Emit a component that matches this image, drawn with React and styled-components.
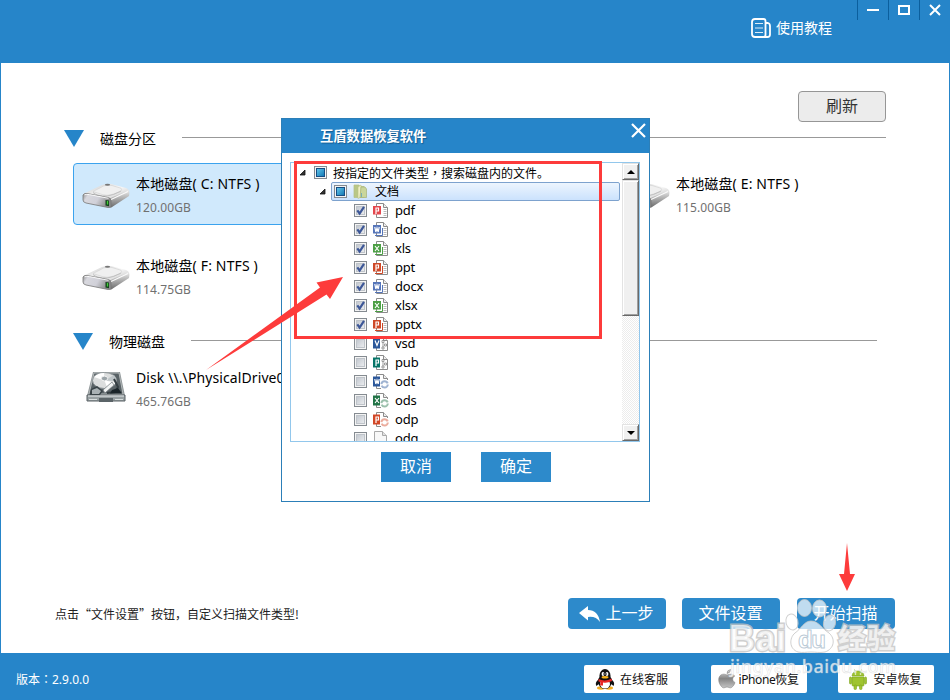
import React, { useState } from "react";
import styled, { createGlobalStyle } from "styled-components";

const GlobalStyle = createGlobalStyle`
  * {
    box-sizing: border-box;
  }
  body {
    margin: 0;
    overflow: hidden;
    font-family: "Noto Sans", "Noto Sans CJK SC", sans-serif;
  }
  svg {
    display: block;
    flex: none;
  }
  button {
    font-family: inherit;
    padding: 0;
    margin: 0;
    border: 0;
    background: none;
  }
`;

const Window = styled.div`
  position: relative;
  display: flex;
  flex-direction: column;
  width: 950px;
  height: 700px;
  background: #fff;
  overflow: hidden;
`;

const Header = styled.header`
  display: flex;
  justify-content: flex-end;
  height: 63px;
  background: #2685c9;
`;

const Tutorial = styled.div`
  display: flex;
  align-items: center;
  gap: 5px;
  height: 20px;
  margin: 18px 25px 0 0;
  color: #fff;
  font-size: 14px;
  line-height: 20px;
`;

const WindowButton = styled.button`
  display: flex;
  justify-content: center;
  width: 31px;
  height: 20px;
  padding-top: 4px;
  border-left: 1px solid #0b5f9e;
`;

const Body = styled.main`
  flex: 1;
  display: flex;
  flex-direction: column;
  border: solid #2685c9;
  border-width: 0 1px;
  padding: 28px 0 0;
`;

const RefreshButton = styled.button`
  align-self: flex-end;
  width: 88px;
  height: 31px;
  margin-right: 63px;
  padding-bottom: 2px;
  border: 1px solid #969696;
  border-radius: 4px;
  background: #ececec;
  color: #333;
  font-size: 16px;
  line-height: 26px;
`;

const SectionTitle = styled.div`
  display: flex;
  align-items: center;
  height: 20px;
  margin: ${(props) => props.$margin};
  color: #000;
  font-size: 14px;
  line-height: 20px;
  span {
    margin: 0 26px 0 16px;
    padding-top: 2px;
  }
  &::after {
    content: "";
    flex: 1;
    height: 1px;
    margin-bottom: 2px;
    background: #999;
  }
`;

const DiskGrid = styled.div`
  display: grid;
  grid-template-columns: repeat(3, 270px);
  grid-auto-rows: 62px;
  row-gap: 20px;
  margin-left: 72px;
`;

const DiskCard = styled.div`
  grid-column: ${(props) => props.$column};
  display: flex;
  align-items: flex-start;
  width: 262px;
  height: 62px;
  padding-left: 8px;
  border: 1px solid ${(props) => (props.$active ? "#3ba3ee" : "transparent")};
  border-radius: 4px;
  background: ${(props) => (props.$active ? "#d0e9fc" : "transparent")};
`;

const DiskIcon = styled.div`
  width: 54px;
  padding-top: ${(props) => props.$top}px;
`;

const DiskText = styled.div`
  white-space: nowrap;
  padding-top: 10px;
  .name {
    color: #000;
    font-size: 14px;
    line-height: 20px;
    height: 24px;
    letter-spacing: ${(props) => props.$spacing || 0}px;
  }
  .size {
    color: #707070;
    font-size: 12px;
    line-height: 20px;
    letter-spacing: 0.1px;
  }
`;

const ActionBar = styled.div`
  display: flex;
  align-items: center;
  margin-top: auto;
  height: 31px;
  margin-bottom: 24px;
  padding: 0 54px 0 54px;
`;

const Hint = styled.p`
  flex: 1;
  margin: 0;
  color: #222;
  font-family: "Noto Sans CJK SC", sans-serif;
  font-size: 12px;
  line-height: 20px;
`;

const ActionButton = styled.button`
  display: flex;
  align-items: center;
  justify-content: center;
  gap: 5px;
  width: 98px;
  height: 31px;
  margin-left: ${(props) => props.$gap || 0}px;
  padding: 0 1px 2px 0;
  border-radius: 4px;
  background: #2d8acb;
  color: #fff;
  font-size: 16px;
  line-height: 28px;
  svg {
    margin-top: 2px;
  }
`;

const Footer = styled.footer`
  display: flex;
  align-items: center;
  gap: 31px;
  height: 47px;
  padding: 5px 16px 0;
  background: #2685c9;
`;

const Version = styled.span`
  flex: 1;
  padding-top: 2px;
  color: #fff;
  font-family: "Noto Sans", "Noto Sans CJK TC", sans-serif;
  font-size: 12px;
  line-height: 20px;
`;

const FooterButton = styled.button`
  display: flex;
  align-items: center;
  justify-content: center;
  gap: ${(props) => props.$gap}px;
  width: 96px;
  height: 28px;
  padding-right: 1px;
  border-radius: 2px;
  background: #fff;
  color: #111;
  font-size: 12px;
  line-height: 20px;
  letter-spacing: ${(props) => props.$spacing || 0}px;
  white-space: nowrap;
  span {
    padding-top: 2px;
  }
`;

const Dialog = styled.div`
  position: absolute;
  left: 281px;
  top: 118px;
  width: 369px;
  height: 384px;
  border: 1px solid #2c7fb8;
  background: #fff;
`;

const DialogTitle = styled.div`
  display: flex;
  align-items: center;
  justify-content: space-between;
  height: 34px;
  padding: 0 3px 0 38px;
  background: #2685c9;
  color: #fff;
  font-size: 13.3px;
  font-weight: bold;
  text-shadow: 1px 1px 1px #145d93;
  span {
    padding-bottom: 2px;
  }
  button {
    align-self: flex-start;
    padding-top: 4px;
  }
`;

const ListBox = styled.div`
  display: flex;
  width: 350px;
  height: 280px;
  margin: 9px 0 0 8px;
  border: 1px solid #92c7ec;
  overflow: hidden;
`;

const Tree = styled.div`
  flex: 1;
  height: 278px;
  overflow: hidden;
`;

const TreeRow = styled.div`
  display: flex;
  align-items: center;
  height: 19px;
  padding-left: ${(props) => props.$indent}px;
`;

const RowLabel = styled.span`
  margin-left: ${(props) => props.$gap}px;
  color: #000;
  font-size: ${(props) => props.$size || 13}px;
  letter-spacing: ${(props) => (props.$size ? 0 : -0.2)}px;
  line-height: 19px;
  white-space: nowrap;
`;

const Comma = styled.span`
  font-family: "Noto Sans CJK TC", sans-serif;
`;

const Selected = styled.div`
  display: flex;
  align-items: center;
  width: 289px;
  height: 19px;
  margin-left: 5px;
  padding-left: 2px;
  border: 1px solid #7da2ce;
  border-radius: 2px;
  background: linear-gradient(#edf5fe, #cbe2fd);
`;

const CheckBox = styled.span`
  display: flex;
  align-items: center;
  justify-content: center;
  flex: none;
  width: 13px;
  height: 13px;
  border: 1px solid #858b91;
  background: linear-gradient(135deg, #b9bfc8, #f4f5f6);
  box-shadow: inset 0 0 0 1px #f4f4f4, inset 0 0 0 2px #bfc4ca;
`;

const Partial = styled.i`
  width: 9px;
  height: 9px;
  border: 1px solid #164d83;
  background: linear-gradient(135deg, #61c5ea, #1479b5);
`;

const ScrollBar = styled.div`
  display: flex;
  flex-direction: column;
  width: 17px;
  background: repeating-conic-gradient(#ececec 0 25%, #fff 0 50%) 0 0 / 2px 2px;
`;

const ScrollPart = styled.div`
  display: flex;
  align-items: center;
  justify-content: center;
  height: ${(props) => props.$height}px;
  margin-top: ${(props) => (props.$last ? "auto" : 0)};
  border: 1px solid;
  border-color: #e3e3e3 #696969 #696969 #e3e3e3;
  box-shadow: inset 1px 1px #fff, inset -1px -1px #a0a0a0;
  background: #f0f0f0;
`;

const DialogButtons = styled.div`
  display: flex;
  gap: 30px;
  margin: 10px 0 0 99px;
  button {
    width: 70px;
    height: 30px;
    padding-bottom: 2px;
    background: #2685c9;
    color: #fff;
    font-size: 16px;
    line-height: 28px;
  }
  button + button {
    background: #2d8acb;
  }
`;

const Overlay = styled.svg`
  position: absolute;
  left: 0;
  top: 0;
  pointer-events: none;
`;

const Triangle = () => (
  <svg width="20" height="17" viewBox="0 0 20 17">
    <path d="M0 0h20L10 17z" fill="#2685c9" />
  </svg>
);

const TutorialIcon = () => (
  <svg width="20" height="20" viewBox="0 0 20 20" fill="none" stroke="#fff">
    <path
      d="M4 1h8.5q2 0 2 2v14q0 2-2 2H4q-3 0-3-3V4q0-3 3-3z"
      strokeWidth="1.8"
    />
    <path d="M15 5h2q2 .5 2 3v8.500q0 2.500-2.500 2.500H13" strokeWidth="1.8" />
    <path d="M4 5.500h8M4 10h8M4 14.500h8" strokeWidth="1" strokeOpacity=".85" />
  </svg>
);

const DriveIcon = () => (
  <svg width="48" height="26" viewBox="0 0 48 26">
    <defs>
      <linearGradient id="driveTop" x1="0" y1="0" x2="1" y2="1">
        <stop offset="0" stopColor="#c9c9c9" />
        <stop offset="0.5" stopColor="#f8f8f8" />
        <stop offset="1" stopColor="#b4b4b4" />
      </linearGradient>
      <linearGradient id="driveFront" x1="0" y1="0" x2="1" y2="0.3">
        <stop offset="0" stopColor="#8c8c8c" />
        <stop offset="0.2" stopColor="#d8d8de" />
        <stop offset="0.6" stopColor="#d0d0d8" />
        <stop offset="1" stopColor="#8b8b8b" />
      </linearGradient>
      <linearGradient id="driveSide" x1="0" y1="0" x2="0" y2="1">
        <stop offset="0" stopColor="#ededed" />
        <stop offset="1" stopColor="#666" />
      </linearGradient>
    </defs>
    <path d="M1 11L20 2q4-1.500 9-1l15 4q3 1 3 4L29 19 3 14z" fill="url(#driveTop)" />
    <path d="M11 8.500L22 2.800q4-1.200 8-.3l9 2.700q2 1.600-1 3.600l-9 3q-4 1-8 0z" fill="#f0f0f0" stroke="#d2d2d2" strokeWidth=".7" />
    <path d="M11 9.500q4 3.500 14 3.500 6-.5 14-5" fill="none" stroke="#b8b8b8" strokeWidth=".8" />
    <ellipse cx="25.500" cy="1.800" rx="2.600" ry="1" fill="#777" />
    <path d="M27.500 15.500L46.500 7q1.500 1 .5 6L28.500 25z" fill="url(#driveSide)" />
    <path d="M28 17l18-8.500" stroke="#fafafa" strokeWidth="1.200" />
    <path d="M1 12q1-2 4-1.500l21 4q3 .6 3 3v5.500q0 2-3 1.500L4 20q-3-.7-3-3z" fill="url(#driveFront)" stroke="#777" strokeWidth=".8" />
    <path d="M2.500 11.800q2-.8 5-.2l19 3.700" fill="none" stroke="#fff" strokeWidth=".9" />
    <path d="M23.500 17l3.500.6v5.600l-3.500-.6z" fill="#12431a" />
    <path d="M25.500 18v3.500" stroke="#43cd38" strokeWidth="1.300" />
  </svg>
);

const PhysicalIcon = () => (
  <svg width="40" height="32" viewBox="0 0 40 32">
    <path d="M7 1h27l5 24H1z" fill="#8f9698" />
    <path d="M8 2h25l4 21H3z" fill="#596266" stroke="#b5babb" />
    <path d="M1 24h38v6H1z" fill="#99a1a3" stroke="#596064" />
    <path d="M2 25h36" stroke="#e6eaeb" />
    <ellipse cx="18.500" cy="9.500" rx="12" ry="8" fill="#dcdede" stroke="#8d9497" />
    <path d="M18.500 9.500L8 6q4-4 10-4zm0 0l11 2q-2 4-8 6z" fill="#fff" />
    <path d="M18.500 9.500L28 4q2.500 3 2 6z" fill="#bec5c8" />
    <ellipse cx="18.500" cy="7.500" rx="3.200" ry="2.400" fill="#9ba4a8" stroke="#f5f5f5" />
    <path d="M17 19l9-8 2 3-9 8z" fill="#f2f4f4" stroke="#6a7377" strokeWidth=".7" />
    <path d="M28 8l4 8-3 5-8 1" fill="none" stroke="#343d41" strokeWidth="2" />
    <path d="M5 18l6-3 6 5-3 4H3.500z" fill="#3a4448" />
    <path d="M6 19l5-2 4 3-2 3H6z" fill="#a9b1b4" />
    <path d="M26 19l6-2 4 5.500H24z" fill="#1a2429" />
    <path d="M13 27h14v4H13z" fill="#5b6468" />
    <path d="M3 28.500h8M29 28.500h8" stroke="#d9dfdf" />
  </svg>
);

const ExpandIcon = () => (
  <svg width="7" height="7" viewBox="0 0 7 7">
    <path d="M6 1v5H1z" fill="#333" stroke="#111" strokeWidth=".8" />
  </svg>
);

const CheckIcon = () => (
  <svg width="11" height="11" viewBox="0 0 11 11">
    <path d="M2.300 5.300l2.300 3.200L9 1.800" fill="none" stroke="#3d5797" strokeWidth="2.200" />
  </svg>
);

const FolderIcon = () => (
  <svg width="15" height="15" viewBox="0 0 15 15">
    <path d="M1 1h5l1 1.500h4v11H1z" fill="#b9c786" stroke="#b4bf83" strokeWidth=".7" />
    <path d="M5 3l3-2v12l-3 1.500z" fill="#f0efc4" stroke="#b8c384" strokeWidth=".6" />
    <path d="M8 3h4l1.500 2v8.500H7z" fill="#cad69b" stroke="#a6b276" strokeWidth=".7" />
    <path d="M8 9h1v4H8z" fill="#79aeb4" />
  </svg>
);

// strokes for the type badge: P, W, X and V
const letters = {
  P: "M3 11V5h2.500v3H3",
  W: "M1.800 5l1 5L4 6l1.200 4 1-5",
  X: "M2 5l4 5M6 5l-4 5",
  V: "M2 4.500l2 5 2-5",
};

const FileIcon = ({ letter, color, open, kind }) => {
  if (kind === "blank") {
    return (
      <svg width="15" height="15" viewBox="0 0 15 15">
        <path d="M1.500 .5h8l4 4v10h-12z" fill="#f8f8f8" stroke="#aaa" />
        <path d="M9.500 .5v4h4" fill="#e1e1e1" stroke="#aaa" />
      </svg>
    );
  }
  return (
    <svg width="16" height="15" viewBox="0 0 16 15">
      <path d="M3.500 .5h7l4 4v10h-11z" fill="#fff" stroke="#8b8b8b" />
      <path d="M10.500 .5v4h4" fill="#eee" stroke="#8b8b8b" />
      {!open && (
        <path d="M10.500 6.500h3M10.500 8.500h3M10.500 10.500h3M10.500 12.500h3" stroke="#aaa" strokeWidth=".8" />
      )}
      {kind === "ring" && (
        <>
          <path d="M8 6h8v9H8z" fill="#fff" />
          <circle
            cx="11.600"
            cy="10.400"
            r="3.200"
            fill="none"
            stroke={color}
            strokeOpacity=".45"
            strokeWidth="2"
            strokeDasharray="8.500 1.550"
          />
        </>
      )}
      {kind === "flow" && (
        <path d="M9 4.500h2v2H9zM11.500 8h2v2h-2zM9 11h2v2H9zM10 7v4" fill="none" stroke="#888" strokeWidth=".8" />
      )}
      <path d={open ? "M0 2.500h7v10H0z" : "M0 3h8v8.500H0z"} fill={color} />
      {!open && kind !== "pdf" && (
        <path d="M2 13.500h7.500V6" fill="none" stroke={color} strokeWidth="1" />
      )}
      <path d={letters[letter]} fill="none" stroke="#fff" strokeWidth="1.200" />
    </svg>
  );
};

const QQIcon = () => (
  <svg width="20" height="21" viewBox="0 0 20 21">
    <ellipse cx="6" cy="19" rx="4" ry="1.700" fill="#f6ae20" />
    <ellipse cx="14" cy="19" rx="4" ry="1.700" fill="#f6ae20" />
    <path d="M5 9C0 13 .5 15 1.500 17L5 14h10l3.500 3c1-2 1.500-4-3.500-8z" fill="#111" />
    <ellipse cx="10" cy="12.500" rx="7" ry="7.500" fill="#111" />
    <ellipse cx="10" cy="15" rx="5" ry="4.500" fill="#fff" />
    <ellipse cx="10" cy="6.500" rx="5.500" ry="6.500" fill="#111" />
    <ellipse cx="8" cy="5" rx="1.400" ry="2" fill="#fff" />
    <ellipse cx="12" cy="5" rx="1.400" ry="2" fill="#fff" />
    <path d="M8.500 4.500v1M11.500 4.500v1" stroke="#111" />
    <ellipse cx="10" cy="8.300" rx="3.500" ry="1.200" fill="#f5b21b" />
    <path d="M3.500 10q6.500 3 13-.5l.5 2.500q-5 2.500-9 1.500v3H5l.5-3.500-2-.5z" fill="#e92625" />
  </svg>
);

const AppleIcon = () => (
  <svg width="18" height="20" viewBox="0 0 18 20">
    <defs>
      <linearGradient id="apple" x1="0" y1="0" x2="0" y2="1">
        <stop offset="0" stopColor="#e0e0e0" />
        <stop offset="0.5" stopColor="#858585" />
        <stop offset="1" stopColor="#c4c4c4" />
      </linearGradient>
    </defs>
    <path
      d="M9 6C6 4.500 3 5 1.500 7.500-.5 11 1.500 16 4.500 18.500c1.500 1 3-.5 4.500-.5s3 1.500 4.500.5c1.500-1 3-3 3.500-5-3-1.500-3-5-.3-6.500C14.500 4.500 12 5 9 6zM9 4.500Q9 1 12.500.5 12.500 4 9 4.500z"
      fill="url(#apple)"
      stroke="#777"
      strokeWidth=".5"
    />
  </svg>
);

const AndroidIcon = () => (
  <svg width="18" height="21" viewBox="0 0 18 21">
    <g fill="#9fc430" stroke="#7ea51e" strokeWidth=".6">
      <path d="M3 7Q3.500 2 9 2t6 5z" />
      <path d="M3 8h12v8q0 1-1 1H4q-1 0-1-1z" />
      <rect x=".5" y="8" width="2" height="7" rx="1" />
      <rect x="15.500" y="8" width="2" height="7" rx="1" />
      <rect x="5" y="16" width="2.500" height="4.500" rx="1" />
      <rect x="10.500" y="16" width="2.500" height="4.500" rx="1" />
      <path d="M5.500.5L6.500 3M12.500.5L11.500 3" />
    </g>
    <circle cx="6.500" cy="5" r=".8" fill="#fff" />
    <circle cx="11.500" cy="5" r=".8" fill="#fff" />
  </svg>
);

const BackIcon = () => (
  <svg width="21" height="16" viewBox="0 0 21 16">
    <path d="M0 7L9 0v4q10 0 12 12-4-6-12-5v3.500z" fill="#fff" />
  </svg>
);

const disks = [
  { name: "本地磁盘( C: NTFS )", size: "120.00GB", column: 1 },
  { name: "本地磁盘( E: NTFS )", size: "115.00GB", column: 3 },
  { name: "本地磁盘( F: NTFS )", size: "114.75GB", column: 1 },
];

const initialTypes = [
  { name: "pdf", letter: "P", color: "#e4474d", kind: "pdf", checked: true },
  { name: "doc", letter: "W", color: "#5575b9", checked: true },
  { name: "xls", letter: "X", color: "#4c9f45", checked: true },
  { name: "ppt", letter: "P", color: "#ce4827", checked: true },
  { name: "docx", letter: "W", color: "#5575b9", checked: true },
  { name: "xlsx", letter: "X", color: "#4c9f45", checked: true },
  { name: "pptx", letter: "P", color: "#ce4827", checked: true },
  { name: "vsd", letter: "V", color: "#2b579a", open: true, kind: "flow" },
  { name: "pub", letter: "P", color: "#077568", open: true, kind: "flow" },
  { name: "odt", letter: "W", color: "#2b579a", open: true, kind: "ring" },
  { name: "ods", letter: "X", color: "#217346", open: true, kind: "ring" },
  { name: "odp", letter: "P", color: "#d24726", open: true, kind: "ring" },
  { name: "odg", kind: "blank" },
];

const FileDialog = () => {
  const [types, setTypes] = useState(initialTypes);

  const toggleType = (name) => {
    setTypes(
      types.map((type) =>
        type.name === name ? { ...type, checked: !type.checked } : type
      )
    );
  };

  return (
    <Dialog>
      <DialogTitle>
        <span>互盾数据恢复软件</span>
        <button>
          <svg width="15" height="15" viewBox="0 0 15 15">
            <path d="M1 1l13 13M14 1L1 14" stroke="#fff" strokeWidth="2.200" />
          </svg>
        </button>
      </DialogTitle>
      <ListBox>
        <Tree>
          <TreeRow $indent={8}>
            <ExpandIcon />
            <RowLabel $gap={8}>
              <CheckBox>
                <Partial />
              </CheckBox>
            </RowLabel>
            <RowLabel $gap={6} $size={12}>
              按指定的文件类型<Comma>，</Comma>搜索磁盘内的文件。
            </RowLabel>
          </TreeRow>
          <TreeRow $indent={28}>
            <ExpandIcon />
            <Selected>
              <CheckBox>
                <Partial />
              </CheckBox>
              <RowLabel $gap={6}>
                <FolderIcon />
              </RowLabel>
              <RowLabel $gap={7} $size={12}>
                文档
              </RowLabel>
            </Selected>
          </TreeRow>
          {types.map((type) => (
            <TreeRow
              key={type.name}
              $indent={63}
              onClick={() => toggleType(type.name)}
            >
              <CheckBox>{type.checked && <CheckIcon />}</CheckBox>
              <RowLabel $gap={6}>
                <FileIcon {...type} />
              </RowLabel>
              <RowLabel $gap={type.kind === "blank" ? 7 : 6}>
                {type.name}
              </RowLabel>
            </TreeRow>
          ))}
        </Tree>
        <ScrollBar>
          <ScrollPart $height={17}>
            <svg width="8" height="4" viewBox="0 0 8 4">
              <path d="M0 4l4-4 4 4z" />
            </svg>
          </ScrollPart>
          <ScrollPart $height={136} />
          <ScrollPart $height={17} $last>
            <svg width="8" height="4" viewBox="0 0 8 4">
              <path d="M0 0h8L4 4z" />
            </svg>
          </ScrollPart>
        </ScrollBar>
      </ListBox>
      <DialogButtons>
        <button>取消</button>
        <button>确定</button>
      </DialogButtons>
    </Dialog>
  );
};

const Marks = () => (
  <Overlay width="950" height="700" viewBox="0 0 950 700">
    <rect x="295.500" y="162.500" width="305" height="175" fill="none" stroke="#fd3b3b" strokeWidth="3" />
    <path d="M206 370L320 287.500 316.500 282.500 343 277 330 299 326.500 294.500z" fill="#fd3b3b" />
    <path d="M847 543l3 31h5l-8 17-8-17h5z" fill="#fd3b3b" />
  </Overlay>
);

const Watermark = () => (
  <Overlay width="950" height="700" viewBox="0 0 950 700">
    <g
      fill="#fff"
      fillOpacity=".7"
      stroke="#c4c4c4"
      strokeOpacity=".8"
      strokeWidth="1"
      fontFamily='"Liberation Sans", "Noto Sans CJK SC", sans-serif'
      fontWeight="bold"
    >
      <ellipse cx="792" cy="622" rx="6" ry="8" transform="rotate(-15 792 622)" />
      <ellipse cx="804.500" cy="608" rx="7" ry="8.500" />
      <ellipse cx="819.500" cy="608.500" rx="7" ry="8.500" />
      <ellipse cx="829.500" cy="623" rx="6" ry="8" transform="rotate(15 829.500 623)" />
      <path d="M811 621c-7 0-10 8-16 12-6 5-6 16 3 19 5 1 8 0 13 0s8 1 14 0c9-3 11-13 4-19-7-4-10-12-18-12z" />
      <g style={{ paintOrder: "stroke" }} strokeWidth="3">
        <text x="729" y="651" fontSize="36" textLength="57">
          Bai
        </text>
        <text x="838" y="649" fontSize="28" textLength="57">
          经验
        </text>
      </g>
      <text x="798" y="648" fontSize="24" fill="#fff" stroke="#a9bccb" textLength="28">
        du
      </text>
    </g>
    <text
      x="730"
      y="673"
      fill="#fff"
      fillOpacity=".75"
      stroke="#ccc"
      strokeOpacity=".55"
      strokeWidth=".6"
      fontFamily='"Noto Sans", sans-serif'
      fontSize="18"
      fontWeight="500"
      textLength="166"
    >
      jingyan.baidu.com
    </text>
  </Overlay>
);

const App = () => {
  const [active, setActive] = useState(0);

  return (
    <>
      <GlobalStyle />
      <Window>
        <Header>
          <Tutorial>
            <TutorialIcon />
            使用教程
          </Tutorial>
          <WindowButton>
            <svg width="12" height="12" viewBox="0 0 12 12">
              <path d="M0 6h12" stroke="#fff" strokeWidth="2" />
            </svg>
          </WindowButton>
          <WindowButton>
            <svg width="12" height="12" viewBox="0 0 12 12">
              <path d="M1 2h10v8H1z" fill="none" stroke="#fff" strokeWidth="2" />
            </svg>
          </WindowButton>
          <WindowButton>
            <svg width="12" height="12" viewBox="0 0 12 12">
              <path d="M1 1l10 10M11 1L1 11" stroke="#fff" strokeWidth="2" />
            </svg>
          </WindowButton>
        </Header>
        <Body>
          <RefreshButton>刷新</RefreshButton>
          <SectionTitle $margin="6px 63px 15px 63px">
            <Triangle />
            <span>磁盘分区</span>
          </SectionTitle>
          <DiskGrid>
            {disks.map((disk, index) => (
              <DiskCard
                key={disk.name}
                $column={disk.column}
                $active={index === active}
                onClick={() => setActive(index)}
              >
                <DiskIcon $top={19}>
                  <DriveIcon />
                </DiskIcon>
                <DiskText $spacing={0.15}>
                  <div className="name">{disk.name}</div>
                  <div className="size">{disk.size}</div>
                </DiskText>
              </DiskCard>
            ))}
          </DiskGrid>
          <SectionTitle $margin="24px 72px 6px 72px">
            <Triangle />
            <span>物理磁盘</span>
          </SectionTitle>
          <DiskGrid>
            <DiskCard $column={1}>
              <DiskIcon $top={13}>
                <svg width="44" height="32" viewBox="-4 0 44 32">
                  <PhysicalIcon />
                </svg>
              </DiskIcon>
              <DiskText $spacing={0.1}>
                <div className="name">Disk \\.\PhysicalDrive0</div>
                <div className="size">465.76GB</div>
              </DiskText>
            </DiskCard>
          </DiskGrid>
          <ActionBar>
            <Hint>点击“文件设置”按钮，自定义扫描文件类型!</Hint>
            <ActionButton>
              <BackIcon />
              上一步
            </ActionButton>
            <ActionButton $gap={16}>文件设置</ActionButton>
            <ActionButton $gap={17}>开始扫描</ActionButton>
          </ActionBar>
        </Body>
        <Footer>
          <Version>版本：2.9.0.0</Version>
          <FooterButton $gap={5}>
            <QQIcon />
            <span>在线客服</span>
          </FooterButton>
          <FooterButton $gap={2} $spacing={-0.4}>
            <AppleIcon />
            <span>iPhone恢复</span>
          </FooterButton>
          <FooterButton $gap={6}>
            <AndroidIcon />
            <span>安卓恢复</span>
          </FooterButton>
        </Footer>
        <FileDialog />
        <Marks />
        <Watermark />
      </Window>
    </>
  );
};

export default App;
